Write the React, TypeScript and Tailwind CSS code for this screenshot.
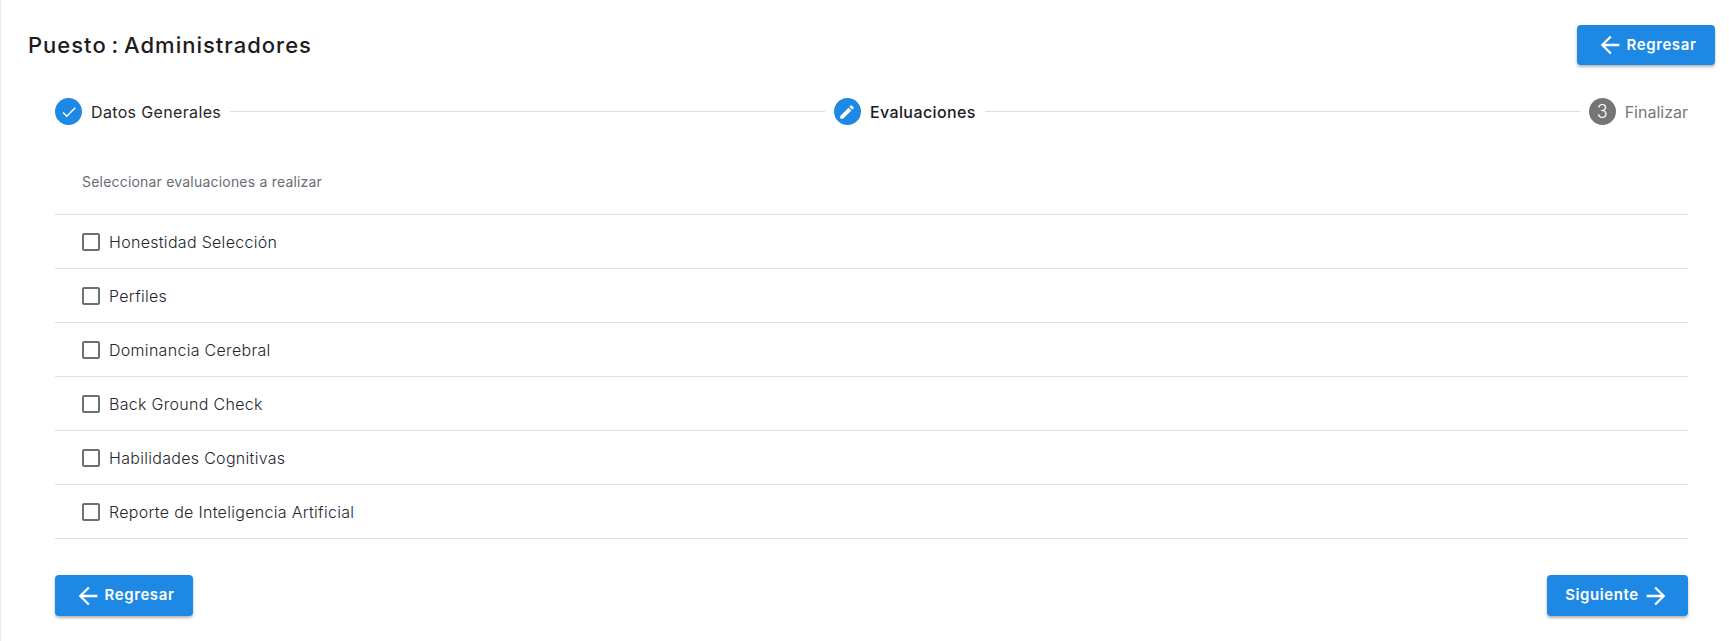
import React from "react";

const font = { fontFamily: "Inter, 'Liberation Sans', sans-serif" };

function ArrowLeft() {
  return (
    <svg viewBox="0 0 24 24" className="w-[28px] h-[28px] shrink-0" fill="#fff">
      <path d="M20 11H7.83l5.59-5.59L12 4l-8 8 8 8 1.41-1.41L7.83 13H20v-2z" />
    </svg>
  );
}
function ArrowRight() {
  return (
    <svg viewBox="0 0 24 24" className="w-[28px] h-[28px] shrink-0" fill="#fff">
      <path d="M12 4l-1.41 1.41L16.17 11H4v2h12.17l-5.58 5.59L12 20l8-8z" />
    </svg>
  );
}
function Btn({ children, w }: { children: React.ReactNode; w: string }) {
  return (
    <button className={`${w} h-[41px] bg-[#1e88e5] rounded-[4px] text-white text-[15px] font-semibold flex items-center justify-center gap-[3px] shadow-[0_2px_3px_rgba(0,0,0,0.3)] tracking-[0.6px]`}>
      {children}
    </button>
  );
}
function Step({ icon, label, bold, muted, color }: { icon: React.ReactNode; label: string; bold?: boolean; muted?: boolean; color: string }) {
  return (
    <div className="flex items-center gap-[9px] shrink-0">
      <div className={`w-[27px] h-[27px] rounded-full flex items-center justify-center ${color}`}>{icon}</div>
      <span className={`text-[16px] ${bold ? "font-medium text-[#1a1a22] tracking-[0.4px]" : muted ? "text-[#777] tracking-[0px]" : "text-[#26262c] tracking-[0.35px]"}`}>{label}</span>
    </div>
  );
}
const items = [
  "Honestidad Selección",
  "Perfiles",
  "Dominancia Cerebral",
  "Back Ground Check",
  "Habilidades Cognitivas",
  "Reporte de Inteligencia Artificial",
];

export default function App() {
  return (
    <div style={font} className="w-[1729px] h-[641px] bg-white border-l border-l-[#e8eff4] overflow-hidden pl-[27px] pr-[14px] pt-[25px]">
      <div className="flex items-center justify-between h-[40px]">
        <h1 className="text-[22px] font-medium text-[#1c1c22] leading-none tracking-[1px] [word-spacing:-2px]">Puesto : Administradores</h1>
        <Btn w="w-[138px] !h-[40px]"><ArrowLeft />Regresar</Btn>
      </div>
      <div className="pl-[27px] pr-[27px]">
        <div className="flex items-center mt-[33px] h-[27px]">
          <Step
            color="bg-[#1e88e5]"
            label="Datos Generales"
            icon={<svg viewBox="0 0 24 24" className="w-[18px] h-[18px]" fill="#fff"><path d="M9 16.17 4.83 12l-1.42 1.41L9 19 21 7l-1.41-1.41z" /></svg>}
          />
          <div className="flex-1 h-px bg-[#dedede] mx-[9px]" />
          <Step
            color="bg-[#1e88e5]"
            bold
            label="Evaluaciones"
            icon={<svg viewBox="0 0 24 24" className="w-[18px] h-[18px]" fill="#fff"><path d="M3 17.25V21h3.75L17.81 9.94l-3.75-3.75L3 17.25zM20.71 7.04a1 1 0 0 0 0-1.41l-2.34-2.34a1 1 0 0 0-1.41 0l-1.83 1.83 3.75 3.75 1.83-1.83z" /></svg>}
          />
          <div className="flex-1 h-px bg-[#dedede] mx-[9px]" />
          <Step
            color="bg-[#757575]"
            muted
            label="Finalizar"
            icon={<span className="text-white text-[18px] leading-none font-light">3</span>}
          />
        </div>
        <div className="h-[90px] flex items-start pl-[27px] pt-[47px] border-b border-b-[#e0e0e0]">
          <span className="text-[14px] text-[#6b6b75] leading-[20px] tracking-[0.2px]">Seleccionar evaluaciones a realizar</span>
        </div>
        {items.map((t) => (
          <div key={t} className="h-[54px] flex items-center pl-[27px] gap-[9px] border-b border-b-[#e0e0e0]">
            <div className="w-[18px] h-[18px] rounded-[2px] border-2 border-[#6f6f6f] shrink-0" />
            <span className="text-[16px] font-light text-[#26262c] tracking-[0.3px]">{t}</span>
          </div>
        ))}
        <div className="flex justify-between mt-[36px]">
          <Btn w="w-[138px]"><ArrowLeft />Regresar</Btn>
          <Btn w="w-[141px]">Siguiente<ArrowRight /></Btn>
        </div>
      </div>
    </div>
  );
}
